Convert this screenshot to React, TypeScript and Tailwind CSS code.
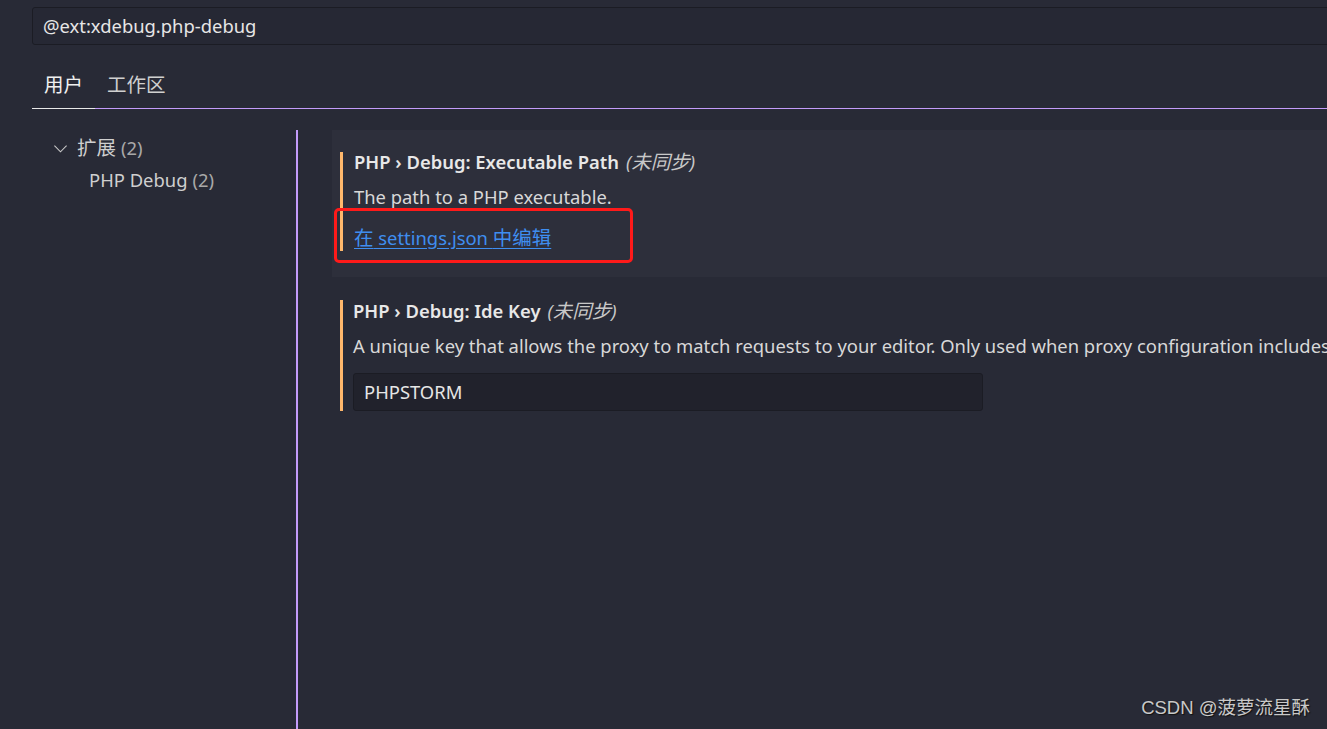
import React from "react";

const FONT = '"Noto Sans", "Noto Sans CJK SC", sans-serif';

function C({ children }: { children: React.ReactNode }) {
  return <span className="text-[19.5px]">{children}</span>;
}

export default function App() {
  return (
    <div
      className="relative w-[1327px] h-[729px] overflow-hidden bg-[#282a36] text-[#e2e2e2] text-[18.4px]"
      style={{ fontFamily: FONT }}
    >
      {/* search */}
      <div className="pt-[7px] pl-[32px]">
        <div className="h-[38px] w-[1320px] rounded-[3px] border border-[#1b1c24] bg-[#262834] pl-[10px] flex items-center leading-[22px] text-[#e6e6e6]">
          @ext:xdebug.php-debug
        </div>
      </div>

      {/* tabs */}
      <div className="pl-[32px]">
        <div className="flex border-b border-[#c39bfa] pt-[29px]">
          <div className="px-[12px] pb-[12px] leading-[22px] text-[19.5px] text-[#f0f0f0] relative">
            用户
            <div className="absolute left-0 right-0 bottom-[-1px] h-[1px] bg-[#e8e8e8]" />
          </div>
          <div className="px-[12px] pb-[12px] leading-[22px] text-[19.5px] text-[#d0d0d0]">工作区</div>
        </div>
      </div>

      {/* content */}
      <div className="flex mt-[21px] h-[620px]">
        <div className="w-[296px] pt-[2px] shrink-0">
          <div className="h-[32px] flex items-center pl-[53px]">
            <svg width="15" height="15" viewBox="0 0 16 16" fill="none" stroke="#c8c8c8" strokeWidth="1.2">
              <polyline points="1.5,5 8,11.5 14.5,5" />
            </svg>
            <span className="ml-[9px] text-[19.5px] text-[#cfcfcf]">扩展</span>
            <span className="ml-[5px] text-[#a8a8a8]">(2)</span>
          </div>
          <div className="h-[32px] flex items-center pl-[89px]">
            <span className="text-[#cfcfcf]">PHP Debug</span>
            <span className="ml-[5px] text-[#a8a8a8]">(2)</span>
          </div>
        </div>
        <div className="w-[2px] bg-[#c39bfa] shrink-0" />
        <div className="flex-1 pl-[34px]">
          {/* setting 1 */}
          <div className="bg-[#2d2f3b] pl-[8px] pt-[22px] pb-[26px]">
            <div className="border-l-[3px] border-[#ffb86c] pl-[11px] pb-[2px]">
              <div className="leading-[20px] whitespace-nowrap">
                <span className="font-semibold text-[#e8e8e8]">PHP › Debug: Executable Path</span>
                <span className="italic text-[#c8c8c8] ml-[7px]">(<C>未同步</C>)</span>
              </div>
              <div className="mt-[14px] leading-[22px] text-[#d8d8d8]">The path to a PHP executable.</div>
              <div className="mt-[19px] leading-[22px]">
                <span className="text-[#3f8ef0] underline underline-offset-[3px]">
                  <C>在</C> settings.json <C>中编辑</C>
                </span>
              </div>
            </div>
          </div>
          {/* setting 2 */}
          <div className="pl-[8px] pt-[23px]">
            <div className="border-l-[3px] border-[#ffb86c] pl-[10px]">
              <div className="leading-[22px] whitespace-nowrap">
                <span className="font-semibold text-[#e8e8e8]">PHP › Debug: Ide Key</span>
                <span className="italic text-[#c8c8c8] ml-[7px]">(<C>未同步</C>)</span>
              </div>
              <div className="mt-[13px] leading-[22px] text-[#d8d8d8] whitespace-nowrap">
                A unique key that allows the proxy to match requests to your editor. Only used when proxy configuration includes
              </div>
              <div className="mt-[16px] w-[630px] h-[38px] rounded-[3px] border border-[#1b1c24] bg-[#21222c] pl-[10px] flex items-center text-[#e6e6e6]">
                PHPSTORM
              </div>
            </div>
          </div>
        </div>
      </div>

      {/* red annotation */}
      <div className="absolute left-[334px] top-[208px] w-[299px] h-[55px] border-[3px] border-[#ff1a1a] rounded-[5px]" />

      {/* watermark */}
      <div
        className="absolute right-[17px] bottom-[7px] text-[18.5px] text-[#c9c9c9]"
        style={{ fontFamily: '"Liberation Sans", "Noto Sans CJK SC", sans-serif', textShadow: "1px 1px 1px #111" }}
      >
        CSDN @菠萝流星酥
      </div>
    </div>
  );
}
